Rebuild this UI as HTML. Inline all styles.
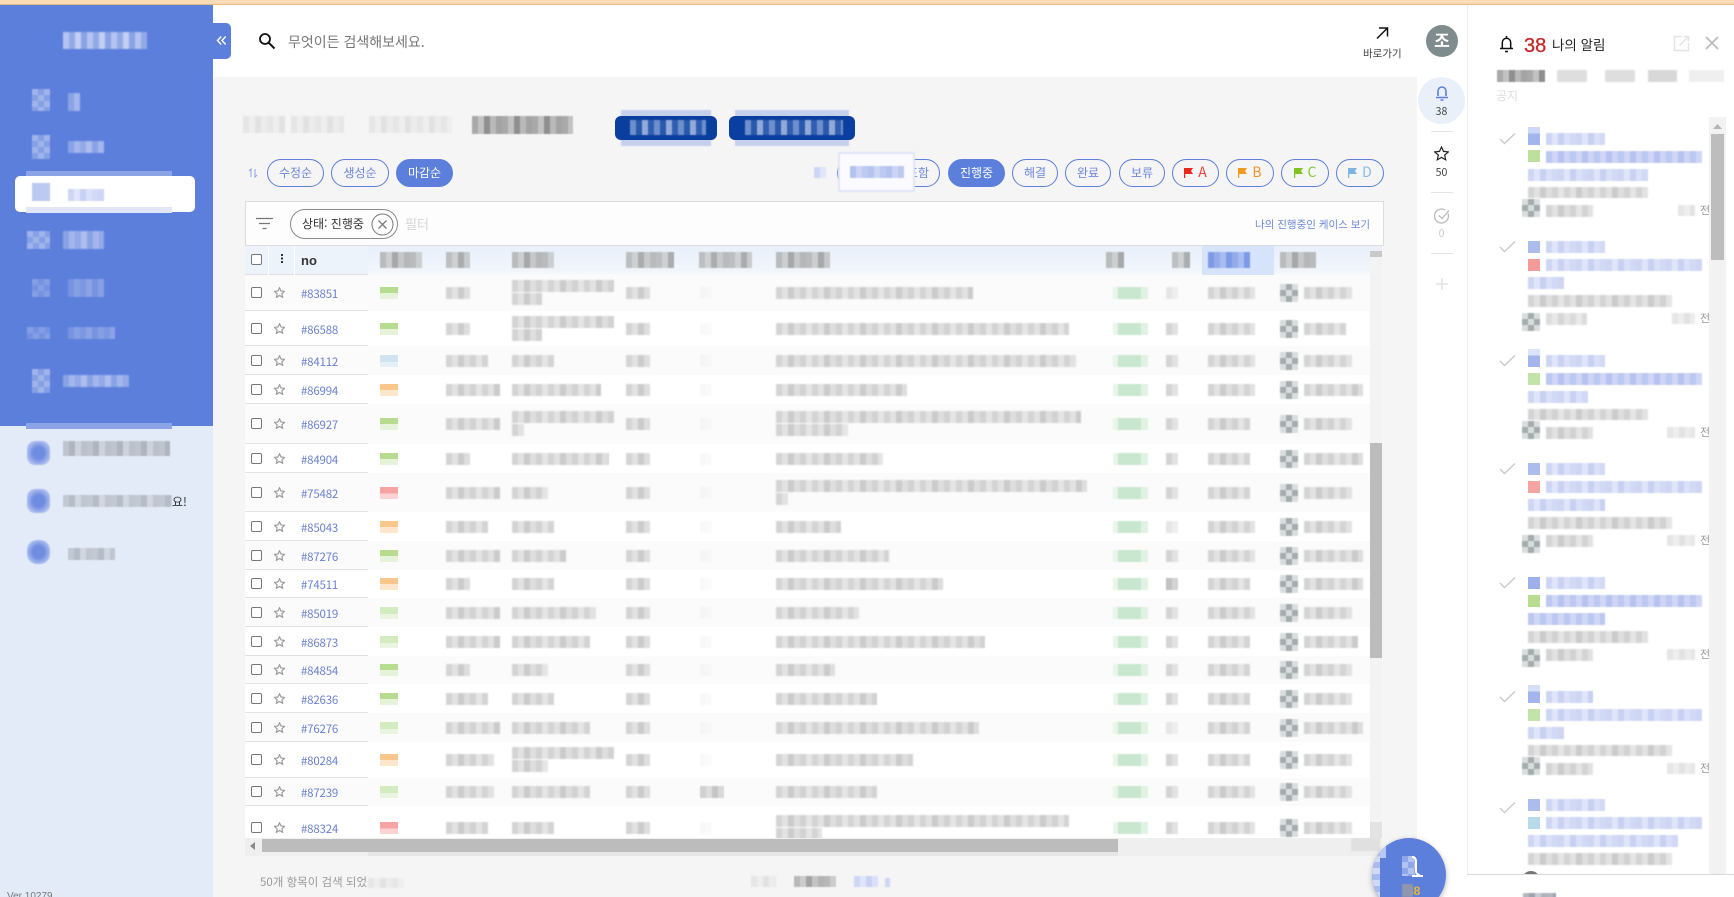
<!DOCTYPE html>
<html lang="ko"><head><meta charset="utf-8"><title>케이스</title>
<style>
*{box-sizing:border-box}
html,body{margin:0;padding:0;width:1734px;height:897px;overflow:hidden;background:#fff}
body{position:relative;font-family:"Liberation Sans","Noto Sans CJK KR",sans-serif;color:#333}
.kr{font-family:"Noto Sans CJK KR","Liberation Sans",sans-serif}
.a{position:absolute}
.g{background:repeating-linear-gradient(90deg,#d4d4d4 0 6px,#e2e2e2 6px 12px,#cbcbcb 12px 18px,#dedede 18px 24px,#d2d2d2 24px 30px,#e5e5e5 30px 36px);filter:blur(.7px)}
.d{background:repeating-linear-gradient(90deg,#a9a9a9 0 6px,#c2c2c2 6px 12px,#8f8f8f 12px 18px,#b9b9b9 18px 24px,#a3a3a3 24px 30px);filter:blur(.6px)}
.w{background:repeating-linear-gradient(90deg,#e6e6e6 0 6px,#eeeeee 6px 12px,#e2e2e2 12px 18px,#ececec 18px 24px);filter:blur(.7px)}
.l{background:repeating-linear-gradient(90deg,#ced6f4 0 6px,#e0e5f9 6px 12px,#c8d1f2 12px 18px,#dae0f8 18px 24px,#d1d9f5 24px 30px);filter:blur(.6px)}
.b{background:repeating-linear-gradient(90deg,#8aa2e6 0 6px,#a4b6ec 6px 12px,#93a9e8 12px 18px,#adbdee 18px 24px);filter:blur(.7px)}
.h{background:repeating-linear-gradient(90deg,#b3b7c0 0 6px,#9ea3ad 6px 12px,#c8ccd2 12px 18px,#aeb2bb 18px 24px);filter:blur(.6px)}
.ic{background:repeating-conic-gradient(#86a0e6 0 25%,#a0b4ec 0 50%) 0 0/12px 12px;filter:blur(.6px)}
.ic2{background:radial-gradient(#6f8ce0 35%,#a9baee 70%,#c6d2f3);filter:blur(.5px)}
.ck{background:repeating-conic-gradient(#a4acae 0 25%,#d9dddd 0 50%) 0 0/12px 12px;filter:blur(.4px)}
.pill{position:absolute;top:159px;height:28px;border:1px solid #5b7fdb;border-radius:14px;background:transparent;color:#6d87d8;font-size:12px;text-align:center;line-height:25px;font-family:"Noto Sans CJK KR","Liberation Sans",sans-serif}
.pill.on{background:#5b7fdb;color:#fff}
.pill svg{vertical-align:-1px;margin-right:5px}
.pill b{font-weight:400;font-size:14px}
.r{position:absolute;left:0;width:1125px;background:#fff}
.r.o{background:#fbfbfb}
.r::after{content:"";position:absolute;left:0;bottom:0;width:123px;height:1px;background:#e2e2e2}
.r>*{position:absolute;top:50%;margin-top:-6px;height:12px}
.r>i.cb{left:6px;width:11px;height:11px;border:1px solid #777;border-radius:2px;background:#fff;margin-top:-6px}
.r>svg.st{left:29px;width:11px;height:11px;margin-top:-6px}
.r>a{left:56px;height:16px;margin-top:-7px;line-height:16px;font-size:11.5px;color:#6b80cf;letter-spacing:-.2px;font-family:"Noto Sans CJK KR",sans-serif}
.fl{left:135px;width:18px}
.gr{background:linear-gradient(#b5dc8f 0 50%,#e6f2da 50%)}
.lg{background:linear-gradient(#d3ecbf 0 60%,#e9f5df 60%)}
.bl{background:linear-gradient(#cfe3f1 0 60%,#e4f0f7 60%)}
.or{background:linear-gradient(#f9c78b 0 50%,#fde6cc 50%)}
.rd{background:linear-gradient(#f7a3a3 0 55%,#fbd3d3 55%)}
.c2{left:201px}.c3{left:267px}.c4{left:381px;width:24px}.c5{left:455px;width:12px;opacity:.15}
.c6{left:531px}.c7{left:868px;width:35px;background:linear-gradient(90deg,#e8f5ea 0 5px,#c8e7ce 5px 28px,#e0f2e3 28px);filter:blur(.6px)}
.c8{left:921px;width:12px}.c9{left:963px;width:47px}.r>.av{left:1035px;width:18px;height:18px;margin-top:-9px}.c10{left:1059px;width:48px}
.two{margin-top:-13px !important}
.two::after{content:"";position:absolute;left:0;top:13px;height:12px;width:var(--b);background:inherit}
.it{position:absolute;left:0;width:267px;height:80px}
.it>*{position:absolute}
.it .k{left:32px;top:-1px;width:17px;height:13px}
.it .s{left:61px;width:12px;height:12px;top:0}
.it .t1{left:79px;width:59px;height:12px;top:0}
.it .t2{left:79px;width:156px;height:12px;top:18px}
.it .t3{left:61px;height:12px;top:36px}
.it .t4{left:61px;height:11px;top:54px}
.it .m{left:55px;width:18px;height:18px}
.it .mt{left:79px;height:12px}
.it .rt{left:211px;width:17px;height:11px;}
.it .jn{left:233px;font-size:11px;color:#999;line-height:14px;font-family:"Noto Sans CJK KR",sans-serif}
</style></head>
<body>
<!-- top strip -->
<div class="a" style="left:0;top:0;width:1734px;height:5px;background:#fcdcb4;border-bottom:1px solid #e3b98a"></div>

<!-- sidebar -->
<div class="a" style="left:0;top:5px;width:213px;height:421px;background:#5b7fdb"></div>
<div class="a" style="left:0;top:426px;width:213px;height:471px;background:#e3ebf9"></div>
<div class="a b" style="left:63px;top:32px;width:84px;height:17px;background:repeating-linear-gradient(90deg,#b4c4f0 0 6px,#93a9e8 6px 12px,#c3cff3 12px 18px,#8aa2e6 18px 24px)"></div>
<div class="a ic" style="left:32px;top:89px;width:18px;height:22px"></div><div class="a b" style="left:68px;top:93px;width:12px;height:18px"></div>
<div class="a ic" style="left:32px;top:135px;width:18px;height:24px"></div><div class="a b" style="left:68px;top:141px;width:36px;height:12px"></div>
<div class="a" style="left:26px;top:171px;width:146px;height:6px;background:#8ca4e6"></div>
<div class="a" style="left:15px;top:176px;width:180px;height:36px;background:#fff;border-radius:5px"></div>
<div class="a" style="left:26px;top:207px;width:146px;height:6px;background:#e1e6f8"></div>
<div class="a" style="left:32px;top:183px;width:18px;height:18px;background:#bcc9f0;filter:blur(.5px)"></div><div class="a l" style="left:68px;top:189px;width:36px;height:12px"></div>
<div class="a ic" style="left:27px;top:231px;width:23px;height:18px"></div><div class="a b" style="left:63px;top:231px;width:41px;height:18px"></div>
<div class="a ic" style="left:32px;top:279px;width:18px;height:18px;opacity:.6"></div><div class="a b" style="left:68px;top:279px;width:36px;height:18px;opacity:.6"></div>
<div class="a ic" style="left:27px;top:327px;width:23px;height:12px;opacity:.6"></div><div class="a b" style="left:68px;top:327px;width:47px;height:12px;opacity:.6"></div>
<div class="a ic" style="left:32px;top:369px;width:18px;height:24px"></div><div class="a b" style="left:63px;top:375px;width:66px;height:12px"></div>
<div class="a" style="left:26px;top:423px;width:146px;height:6px;background:#8ca4e6"></div>
<div class="a ic2" style="left:27px;top:441px;width:23px;height:24px;border-radius:8px"></div><div class="a h" style="left:63px;top:441px;width:107px;height:15px;opacity:.75"></div>
<div class="a ic2" style="left:27px;top:489px;width:23px;height:24px;border-radius:8px"></div><div class="a h" style="left:63px;top:495px;width:109px;height:12px;opacity:.65"></div>
<div class="a kr" style="left:172px;top:494px;font-size:12px;color:#333;line-height:16px">요!</div>
<div class="a ic2" style="left:27px;top:540px;width:23px;height:24px;border-radius:10px"></div><div class="a h" style="left:68px;top:548px;width:47px;height:12px;opacity:.65"></div>
<div class="a" style="left:7px;top:891px;font-size:10px;color:#777;line-height:12px">Ver 10279</div>

<!-- toggle -->
<div class="a" style="left:213px;top:23px;width:18px;height:36px;background:#5b7fdb;border-radius:0 5px 5px 0"></div>
<svg class="a" style="left:216px;top:35px" width="11" height="11" viewBox="0 0 11 11" fill="none" stroke="#fff" stroke-width="1.4"><path d="M5.2 1.5 1.5 5.500l3.700 4M9.700 1.500 6 5.500l3.700 4"/></svg>

<!-- header -->
<svg class="a" style="left:258px;top:32px" width="18" height="18" viewBox="0 0 18 18" fill="none" stroke="#111" stroke-width="1.8"><circle cx="7" cy="7" r="5"/><path d="M10.8 10.8 16.5 16.5" stroke-width="2"/></svg>
<div class="a kr" style="left:288px;top:31px;font-size:14px;color:#777;line-height:22px;white-space:nowrap">무엇이든 검색해보세요.</div>
<svg class="a" style="left:1375px;top:26px" width="14" height="14" viewBox="0 0 14 14" fill="none" stroke="#111" stroke-width="1.5"><path d="M2 12.500 12 2.500M4 2h8.500v8.500"/></svg>
<div class="a kr" style="left:1363px;top:46px;font-size:10.5px;color:#444;line-height:16px;white-space:nowrap">바로가기</div>
<div class="a kr" style="left:1426px;top:25px;width:32px;height:32px;border-radius:50%;background:#7f8c8d;color:#fff;font-size:17px;font-weight:700;text-align:center;line-height:29px">조</div>

<!-- content bg -->
<div class="a" style="left:213px;top:77px;width:1204px;height:820px;background:#f5f5f5"></div>

<!-- breadcrumb -->
<div class="a w" style="left:243px;top:116px;width:42px;height:17px"></div>
<div class="a w" style="left:291px;top:116px;width:53px;height:17px"></div>
<div class="a w" style="left:369px;top:116px;width:83px;height:17px"></div>
<div class="a d" style="left:472px;top:116px;width:101px;height:18px"></div>

<!-- blue mosaic buttons -->
<div class="a" style="left:621px;top:110px;width:90px;height:36px;background:#c4d0ec;filter:blur(.6px)"></div>
<div class="a" style="left:615px;top:116px;width:102px;height:24px;background:#0a3fa0;border-radius:6px"></div>
<div class="a" style="left:630px;top:120px;width:76px;height:15px;background:repeating-linear-gradient(90deg,#6f8fcc 0 6px,#2a58ad 6px 12px,#93aad8 12px 18px,#315eb2 18px 24px);filter:blur(.6px)"></div>
<div class="a" style="left:735px;top:110px;width:114px;height:36px;background:#c4d0ec;filter:blur(.6px)"></div>
<div class="a" style="left:729px;top:116px;width:126px;height:24px;background:#0a3fa0;border-radius:6px"></div>
<div class="a" style="left:745px;top:120px;width:98px;height:15px;background:repeating-linear-gradient(90deg,#6f8fcc 0 6px,#2a58ad 6px 12px,#93aad8 12px 18px,#315eb2 18px 24px);filter:blur(.6px)"></div>

<!-- sort -->
<svg class="a" style="left:248px;top:167px" width="10" height="12" viewBox="0 0 10 12" fill="none" stroke="#8ea3e0" stroke-width="1"><path d="M3 10V2L1 4M7 2v8l2-2"/></svg>
<div class="pill" style="left:267px;width:57px">수정순</div>
<div class="pill" style="left:331px;width:58px">생성순</div>
<div class="pill on" style="left:396px;width:57px">마감순</div>

<div class="pill" style="left:837px;width:103px;text-align:right;padding-right:10px">포함</div>
<div class="a l" style="left:814px;top:167px;width:12px;height:11px"></div>
<div class="a" style="left:840px;top:154px;width:73px;height:36px;background:#fbfbff;box-shadow:0 0 0 2px #e0e5f7;filter:blur(.5px)"></div>
<div class="a l" style="left:850px;top:166px;width:54px;height:12px;background:repeating-linear-gradient(90deg,#b4c2ee 0 6px,#ccd5f4 6px 12px,#bcc9f0 12px 18px)"></div>
<div class="pill on" style="left:948px;width:57px">진행중</div>
<div class="pill" style="left:1012px;width:46px">해결</div>
<div class="pill" style="left:1065px;width:46px">완료</div>
<div class="pill" style="left:1119px;width:46px">보류</div>
<div class="pill" style="left:1172px;width:47px;color:#e8453a"><svg width="9" height="10" viewBox="0 0 9 10"><path d="M0 0h9L7 3l2 3H1.2v4H0z" fill="#e8281c"/></svg><b>A</b></div>
<div class="pill" style="left:1226px;width:48px;color:#f0922a"><svg width="9" height="10" viewBox="0 0 9 10"><path d="M0 0h9L7 3l2 3H1.2v4H0z" fill="#f29a1e"/></svg><b>B</b></div>
<div class="pill" style="left:1281px;width:48px;color:#84c832"><svg width="9" height="10" viewBox="0 0 9 10"><path d="M0 0h9L7 3l2 3H1.2v4H0z" fill="#7ec522"/></svg><b>C</b></div>
<div class="pill" style="left:1336px;width:48px;color:#8ab8e4"><svg width="9" height="10" viewBox="0 0 9 10"><path d="M0 0h9L7 3l2 3H1.2v4H0z" fill="#7fb3e0"/></svg><b>D</b></div>

<!-- filter bar -->
<div class="a" style="left:245px;top:201px;width:1139px;height:45px;background:#fdfdfd;border:1px solid #dcdcdc"></div>
<svg class="a" style="left:256px;top:217px" width="17" height="13" viewBox="0 0 17 13" fill="none" stroke="#777" stroke-width="1.3"><path d="M0 1.500h17M3 6.500h11M6.500 11.500h4"/></svg>
<div class="a" style="left:290px;top:209px;width:108px;height:30px;border:1px solid #8a8a8a;border-radius:15px;background:#fdfdfd"></div>
<div class="a kr" style="left:302px;top:215px;font-size:12px;color:#333;line-height:18px;white-space:nowrap">상태: 진행중</div>
<svg class="a" style="left:371px;top:213px" width="23" height="23" viewBox="0 0 23 23" fill="none" stroke="#777"><circle cx="11.500" cy="11.500" r="10.500"/><path d="M7.500 7.500l8 8M15.500 7.500l-8 8" stroke-width="1.3"/></svg>
<div class="a kr" style="left:405px;top:215px;font-size:13px;color:#d5d5d5;line-height:18px">필터</div>
<div class="a kr" style="left:1255px;top:216px;font-size:10.5px;color:#6b86d6;line-height:18px;white-space:nowrap">나의 진행중인 케이스 보기</div>

<!-- table -->
<div class="a" style="left:245px;top:246px;width:1137px;height:610px;background:#f9f9f9"></div>
<div class="a" style="left:245px;top:246px;width:1137px;height:30px;background:linear-gradient(#e9f0fa,#f1f5fb 80%,#f9fafc)"></div>
<div class="a" style="left:245px;top:246px;width:123px;height:29px;background:#edf3fa;border-bottom:1px solid #e0e0e0"></div>
<div class="a" style="left:268px;top:246px;width:1px;height:29px;background:#fff"></div>
<div class="a" style="left:294px;top:246px;width:1px;height:29px;background:#fff"></div>
<i class="a" style="left:251px;top:254px;width:11px;height:11px;border:1px solid #777;border-radius:2px;background:#fff"></i>
<div class="a" style="left:280.5px;top:254px;width:2px;height:2px;background:#333;box-shadow:0 3.5px #333,0 7px #333"></div>
<div class="a" style="left:301px;top:252px;font-size:13px;font-weight:700;color:#333;line-height:18px">no</div>
<div class="a d" style="left:380px;top:252px;width:42px;height:16px;opacity:.75"></div>
<div class="a d" style="left:446px;top:252px;width:24px;height:16px;opacity:.7"></div>
<div class="a d" style="left:512px;top:252px;width:42px;height:16px;opacity:.75"></div>
<div class="a d" style="left:626px;top:252px;width:48px;height:16px;opacity:.7"></div>
<div class="a d" style="left:699px;top:252px;width:53px;height:16px;opacity:.7"></div>
<div class="a d" style="left:776px;top:252px;width:54px;height:16px;opacity:.75"></div>
<div class="a d" style="left:1106px;top:252px;width:18px;height:16px;opacity:.75"></div>
<div class="a d" style="left:1172px;top:252px;width:18px;height:16px;opacity:.7"></div>
<div class="a" style="left:1202px;top:246px;width:72px;height:29px;background:#d6e4fb"></div>
<div class="a" style="left:1208px;top:252px;width:42px;height:16px;background:repeating-linear-gradient(90deg,#7e9ae6 0 6px,#94abea 6px 12px,#a9bcef 12px 18px);filter:blur(.6px)"></div>
<div class="a d" style="left:1280px;top:252px;width:36px;height:16px;opacity:.75"></div>
<div class="a" style="left:1370px;top:251px;width:12px;height:6px;background:#c9c9c9"></div>

<div class="a" style="left:245px;top:275px;width:1125px;height:563px;overflow:hidden">
<svg width="0" height="0" style="position:absolute"><defs><path id="st" d="M5.500.8 7 4l3.500.4-2.600 2.400.7 3.500-3.100-1.800-3.100 1.800.7-3.500L.5 4.400 4 4z" fill="none" stroke="#9c9c9c" stroke-width="1.200"/></defs></svg>
<div class="r o" style="top:0;height:36px"><i class="cb"></i><svg class="st" viewBox="0 0 11 11"><use href="#st"/></svg><a>#83851</a><div class="fl gr"></div><div class="g c2" style="width:24px"></div><div class="g c3 two" style="width:102px;--b:30px"></div><div class="g c4"></div><div class="g c5"></div><div class="g c6" style="width:197px"></div><div class="c7"></div><div class="w c8"></div><div class="g c9"></div><div class="ck av"></div><div class="g c10"></div></div>
<div class="r" style="top:36px;height:35px"><i class="cb"></i><svg class="st" viewBox="0 0 11 11"><use href="#st"/></svg><a>#86588</a><div class="fl gr"></div><div class="g c2" style="width:24px"></div><div class="g c3 two" style="width:102px;--b:30px"></div><div class="g c4"></div><div class="g c5"></div><div class="g c6" style="width:293px"></div><div class="c7"></div><div class="g c8"></div><div class="g c9"></div><div class="ck av"></div><div class="g c10" style="width:42px"></div></div>
<div class="r o" style="top:71px;height:29px"><i class="cb"></i><svg class="st" viewBox="0 0 11 11"><use href="#st"/></svg><a>#84112</a><div class="fl bl"></div><div class="g c2" style="width:42px"></div><div class="g c3" style="width:42px"></div><div class="g c4"></div><div class="g c5"></div><div class="g c6" style="width:300px"></div><div class="c7"></div><div class="g c8"></div><div class="g c9"></div><div class="ck av"></div><div class="g c10"></div></div>
<div class="r" style="top:100px;height:29px"><i class="cb"></i><svg class="st" viewBox="0 0 11 11"><use href="#st"/></svg><a>#86994</a><div class="fl or"></div><div class="g c2" style="width:54px"></div><div class="g c3" style="width:89px"></div><div class="g c4"></div><div class="g c5"></div><div class="g c6" style="width:131px"></div><div class="c7"></div><div class="g c8"></div><div class="g c9"></div><div class="ck av"></div><div class="g c10" style="width:59px"></div></div>
<div class="r o" style="top:129px;height:40px"><i class="cb"></i><svg class="st" viewBox="0 0 11 11"><use href="#st"/></svg><a>#86927</a><div class="fl gr"></div><div class="g c2" style="width:54px"></div><div class="g c3 two" style="width:102px;--b:12px"></div><div class="g c4"></div><div class="g c5"></div><div class="g c6 two" style="width:305px;--b:72px"></div><div class="c7"></div><div class="g c8"></div><div class="g c9" style="width:42px"></div><div class="ck av"></div><div class="g c10"></div></div>
<div class="r" style="top:169px;height:29px"><i class="cb"></i><svg class="st" viewBox="0 0 11 11"><use href="#st"/></svg><a>#84904</a><div class="fl gr"></div><div class="g c2" style="width:24px"></div><div class="g c3" style="width:97px"></div><div class="g c4"></div><div class="g c5"></div><div class="g c6" style="width:107px"></div><div class="c7"></div><div class="g c8"></div><div class="g c9" style="width:42px"></div><div class="ck av"></div><div class="g c10" style="width:59px"></div></div>
<div class="r o" style="top:198px;height:39px"><i class="cb"></i><svg class="st" viewBox="0 0 11 11"><use href="#st"/></svg><a>#75482</a><div class="fl rd"></div><div class="g c2" style="width:54px"></div><div class="g c3" style="width:36px"></div><div class="g c4"></div><div class="g c5"></div><div class="g c6 two" style="width:311px;--b:12px"></div><div class="c7"></div><div class="g c8"></div><div class="g c9" style="width:42px"></div><div class="ck av"></div><div class="g c10"></div></div>
<div class="r" style="top:237px;height:29px"><i class="cb"></i><svg class="st" viewBox="0 0 11 11"><use href="#st"/></svg><a>#85043</a><div class="fl or"></div><div class="g c2" style="width:42px"></div><div class="g c3" style="width:42px"></div><div class="g c4"></div><div class="g c5"></div><div class="g c6" style="width:65px"></div><div class="c7"></div><div class="w c8"></div><div class="g c9"></div><div class="ck av"></div><div class="g c10"></div></div>
<div class="r o" style="top:266px;height:29px"><i class="cb"></i><svg class="st" viewBox="0 0 11 11"><use href="#st"/></svg><a>#87276</a><div class="fl gr"></div><div class="g c2" style="width:54px"></div><div class="g c3" style="width:54px"></div><div class="g c4"></div><div class="g c5"></div><div class="g c6" style="width:113px"></div><div class="c7"></div><div class="g c8"></div><div class="g c9"></div><div class="ck av"></div><div class="g c10" style="width:59px"></div></div>
<div class="r" style="top:295px;height:28px"><i class="cb"></i><svg class="st" viewBox="0 0 11 11"><use href="#st"/></svg><a>#74511</a><div class="fl or"></div><div class="g c2" style="width:24px"></div><div class="g c3" style="width:42px"></div><div class="g c4"></div><div class="g c5"></div><div class="g c6" style="width:167px"></div><div class="c7"></div><div class="d c8" style="opacity:.7"></div><div class="g c9" style="width:42px"></div><div class="ck av"></div><div class="g c10" style="width:59px"></div></div>
<div class="r o" style="top:323px;height:29px"><i class="cb"></i><svg class="st" viewBox="0 0 11 11"><use href="#st"/></svg><a>#85019</a><div class="fl lg"></div><div class="g c2" style="width:54px"></div><div class="g c3" style="width:84px"></div><div class="g c4"></div><div class="g c5"></div><div class="g c6" style="width:83px"></div><div class="c7"></div><div class="g c8"></div><div class="g c9"></div><div class="ck av"></div><div class="g c10"></div></div>
<div class="r" style="top:352px;height:29px"><i class="cb"></i><svg class="st" viewBox="0 0 11 11"><use href="#st"/></svg><a>#86873</a><div class="fl lg"></div><div class="g c2" style="width:54px"></div><div class="g c3" style="width:78px"></div><div class="g c4"></div><div class="g c5"></div><div class="g c6" style="width:209px"></div><div class="c7"></div><div class="g c8"></div><div class="g c9" style="width:42px"></div><div class="ck av"></div><div class="g c10" style="width:54px"></div></div>
<div class="r o" style="top:381px;height:28px"><i class="cb"></i><svg class="st" viewBox="0 0 11 11"><use href="#st"/></svg><a>#84854</a><div class="fl gr"></div><div class="g c2" style="width:24px"></div><div class="g c3" style="width:36px"></div><div class="g c4"></div><div class="g c5"></div><div class="g c6" style="width:59px"></div><div class="c7"></div><div class="g c8"></div><div class="g c9" style="width:42px"></div><div class="ck av"></div><div class="g c10"></div></div>
<div class="r" style="top:409px;height:29px"><i class="cb"></i><svg class="st" viewBox="0 0 11 11"><use href="#st"/></svg><a>#82636</a><div class="fl gr"></div><div class="g c2" style="width:42px"></div><div class="g c3" style="width:42px"></div><div class="g c4"></div><div class="g c5"></div><div class="g c6" style="width:101px"></div><div class="c7"></div><div class="g c8"></div><div class="g c9" style="width:42px"></div><div class="ck av"></div><div class="g c10"></div></div>
<div class="r o" style="top:438px;height:29px"><i class="cb"></i><svg class="st" viewBox="0 0 11 11"><use href="#st"/></svg><a>#76276</a><div class="fl lg"></div><div class="g c2" style="width:54px"></div><div class="g c3" style="width:78px"></div><div class="g c4"></div><div class="g c5"></div><div class="g c6" style="width:203px"></div><div class="c7"></div><div class="w c8"></div><div class="g c9" style="width:42px"></div><div class="ck av"></div><div class="g c10" style="width:59px"></div></div>
<div class="r" style="top:467px;height:36px"><i class="cb"></i><svg class="st" viewBox="0 0 11 11"><use href="#st"/></svg><a>#80284</a><div class="fl or"></div><div class="g c2" style="width:48px"></div><div class="g c3 two" style="width:102px;--b:36px"></div><div class="g c4"></div><div class="g c5"></div><div class="g c6" style="width:137px"></div><div class="c7"></div><div class="g c8"></div><div class="g c9" style="width:42px"></div><div class="ck av"></div><div class="g c10"></div></div>
<div class="r o" style="top:503px;height:28px"><i class="cb"></i><svg class="st" viewBox="0 0 11 11"><use href="#st"/></svg><a>#87239</a><div class="fl lg"></div><div class="g c2" style="width:48px"></div><div class="g c3" style="width:78px"></div><div class="g c4"></div><div class="d c5" style="width:24px;opacity:.5"></div><div class="g c6" style="width:101px"></div><div class="c7"></div><div class="g c8"></div><div class="g c9"></div><div class="ck av"></div><div class="g c10"></div></div>
<div class="r" style="top:531px;height:44px"><i class="cb"></i><svg class="st" viewBox="0 0 11 11"><use href="#st"/></svg><a>#88324</a><div class="fl rd"></div><div class="g c2" style="width:42px"></div><div class="g c3" style="width:42px"></div><div class="g c4"></div><div class="g c5"></div><div class="g c6 two" style="width:293px;--b:46px"></div><div class="c7"></div><div class="g c8"></div><div class="g c9"></div><div class="ck av"></div><div class="g c10"></div></div>
</div>
<!-- scrollbars -->
<div class="a" style="left:1370px;top:257px;width:12px;height:581px;background:#f3f3f3"></div>
<div class="a" style="left:1370px;top:443px;width:12px;height:215px;background:#bcbcbc"></div>
<div class="a" style="left:1370px;top:822px;width:12px;height:16px;background:#e3e3e3"></div>
<div class="a" style="left:245px;top:838px;width:1137px;height:18px;background:#efefef"></div>
<div class="a" style="left:262px;top:839px;width:856px;height:13px;background:#bcbcbc"></div>
<div class="a" style="left:368px;top:852px;width:750px;height:4px;background:#e6e6e6"></div>
<svg class="a" style="left:250px;top:842px" width="6" height="8"><path d="M5 0v8L0 4z" fill="#888"/></svg>
<div class="a" style="left:1351px;top:838px;width:29px;height:13px;background:#e0e0e0;filter:blur(.6px)"></div>

<!-- footer -->
<div class="a kr" style="left:260px;top:873px;font-size:11.5px;color:#999;line-height:18px;white-space:nowrap;width:108px;overflow:hidden">50개 항목이 검색 되었습니다</div>
<div class="a w" style="left:368px;top:878px;width:36px;height:10px"></div>
<div class="a w" style="left:751px;top:876px;width:25px;height:11px"></div>
<div class="a d" style="left:794px;top:876px;width:42px;height:11px;opacity:.8"></div>
<div class="a l" style="left:854px;top:876px;width:24px;height:11px"></div>
<div class="a l" style="left:885px;top:878px;width:5px;height:9px"></div>

<!-- right rail -->
<div class="a" style="left:1418px;top:77px;width:47px;height:47px;border-radius:50%;background:#eaf0fa"></div>
<svg class="a" style="left:1435px;top:85px" width="14" height="16" viewBox="0 0 14 16" fill="none" stroke="#5b7fdb" stroke-width="1.6"><path d="M3 11V6a4 4 0 0 1 8 0v5M1 12.500h12M5.500 15h3"/></svg>
<div class="a kr" style="left:1418px;top:104px;width:47px;text-align:center;font-size:10.5px;color:#444;line-height:16px">38</div>
<div class="a" style="left:1431px;top:131px;width:22px;height:1px;background:#e3e3e3"></div>
<svg class="a" style="left:1434px;top:146px" width="15" height="15" viewBox="0 0 15 15" fill="none" stroke="#222" stroke-width="1.2"><path d="M7.500 1 9.500 5.400l4.800.5-3.600 3.200 1 4.700-4.200-2.400-4.200 2.400 1-4.700L.7 5.900l4.800-.5z"/></svg>
<div class="a kr" style="left:1418px;top:165px;width:47px;text-align:center;font-size:10.5px;color:#444;line-height:16px">50</div>
<div class="a" style="left:1431px;top:192px;width:22px;height:1px;background:#e3e3e3"></div>
<svg class="a" style="left:1434px;top:208px" width="16" height="16" viewBox="0 0 16 16" fill="none" stroke="#bbb" stroke-width="1.3"><path d="M14 5.500A7 7 0 1 1 11 2"/><path d="M4.800 7.500 8 10.500l7-8"/></svg>
<div class="a kr" style="left:1418px;top:226px;width:47px;text-align:center;font-size:10.5px;color:#ccc;line-height:16px">0</div>
<div class="a" style="left:1431px;top:253px;width:22px;height:1px;background:#e3e3e3"></div>
<svg class="a" style="left:1436px;top:278px" width="12" height="12" fill="none" stroke="#ddd" stroke-width="1.3"><path d="M6 0v12M0 6h12"/></svg>

<!-- notification panel -->
<div class="a" style="left:1467px;top:5px;width:267px;height:892px;background:#fff;border-left:1px solid #eee"></div>
<svg class="a" style="left:1499px;top:35px" width="15" height="18" viewBox="0 0 15 18" fill="none" stroke="#111" stroke-width="1.5"><path d="M3.300 13V7.500a4.200 4.200 0 0 1 8.400 0V13M1 13.500h13M6 16.500h3"/><path d="M7.500 1v2"/></svg>
<div class="a" style="left:1524px;top:33px;font-size:20px;color:#c62828;line-height:26px;font-weight:400;-webkit-text-stroke:.3px #c62828">38</div>
<div class="a kr" style="left:1552px;top:33px;font-size:13.5px;color:#222;line-height:22px;white-space:nowrap">나의 알림</div>
<svg class="a" style="left:1673px;top:35px" width="17" height="17" viewBox="0 0 17 17" fill="none" stroke="#e4e4e4" stroke-width="1.5"><path d="M15.500 8v7.500h-14v-14H9M6.500 10.500 15.500 1.500M10.500 1.500h5v5"/></svg>
<svg class="a" style="left:1705px;top:36px" width="14" height="14" fill="none" stroke="#bbb" stroke-width="1.8"><path d="M1 1l12 12M13 1 1 13"/></svg>
<div class="a d" style="left:1497px;top:70px;width:48px;height:12px"></div>
<div class="a w" style="left:1557px;top:70px;width:30px;height:12px;background:#dedede"></div>
<div class="a w" style="left:1605px;top:70px;width:30px;height:12px;background:#dedede"></div>
<div class="a w" style="left:1648px;top:70px;width:29px;height:12px;background:#d8d8d8"></div>
<div class="a w" style="left:1689px;top:70px;width:35px;height:12px;background:#efefef"></div>
<div class="a kr" style="left:1496px;top:87px;font-size:12px;color:#ddd;line-height:18px">공지</div>

<div class="a" style="left:1709px;top:117px;width:17px;height:757px;background:#f2f2f2"></div>
<div class="a" style="left:1711px;top:134px;width:13px;height:126px;background:#bdbdbd"></div>
<svg class="a" style="left:1713px;top:124px" width="9" height="5"><path d="M4.500 0 9 5H0z" fill="#b5b5b5"/></svg>

<div class="a" style="left:1467px;top:0;width:242px;height:874px;overflow:hidden">
<svg width="0" height="0" style="position:absolute"><defs><path id="ck" d="M1 6.500 5.500 11 16 1" fill="none" stroke="#ccc" stroke-width="1.5"/></defs></svg>
<div class="it" style="top:133px"><svg class="k" viewBox="0 0 17 12"><use href="#ck"/></svg><div class="s" style="top:-6px;height:18px;background:linear-gradient(#cfd8f6 35%,#a3b5ec 35%)"></div><div class="l t1"></div><div class="s" style="top:17px;background:#bfe09c"></div><div class="l t2" style="background:repeating-linear-gradient(90deg,#bcc8f0 0 6px,#cfd7f5 6px 12px,#b6c3ef 12px 18px,#ccd5f4 18px 24px)"></div><div class="l t3" style="width:120px"></div><div class="g t4" style="width:120px"></div><div class="ck m" style="top:66px"></div><div class="g mt" style="top:72px;width:47px"></div><div class="w rt" style="top:72px"></div><div class="jn" style="top:70px">전</div></div>
<div class="it" style="top:241px"><svg class="k" viewBox="0 0 17 12"><use href="#ck"/></svg><div class="s" style="background:#abbced"></div><div class="l t1"></div><div class="s" style="top:18px;background:#f29b98"></div><div class="l t2"></div><div class="l t3" style="width:36px"></div><div class="g t4" style="width:144px;height:12px"></div><div class="ck m" style="top:72px"></div><div class="g mt" style="top:72px;width:41px;opacity:.8"></div><div class="w rt" style="top:72px;left:205px;width:23px"></div><div class="jn" style="top:70px">전</div></div>
<div class="it" style="top:355px"><svg class="k" viewBox="0 0 17 12"><use href="#ck"/></svg><div class="s" style="top:-6px;height:18px;background:linear-gradient(#dee4f8 35%,#a3b5ec 35%)"></div><div class="l t1"></div><div class="s" style="top:18px;background:#c4e3a8"></div><div class="l t2" style="background:repeating-linear-gradient(90deg,#bcc8f0 0 6px,#cfd7f5 6px 12px,#b6c3ef 12px 18px,#ccd5f4 18px 24px)"></div><div class="l t3" style="width:60px"></div><div class="g t4" style="width:120px"></div><div class="ck m" style="top:66px"></div><div class="g mt" style="top:72px;width:47px"></div><div class="w rt" style="top:72px;left:200px;width:28px"></div><div class="jn" style="top:70px">전</div></div>
<div class="it" style="top:463px"><svg class="k" viewBox="0 0 17 12"><use href="#ck"/></svg><div class="s" style="background:#abbced"></div><div class="l t1"></div><div class="s" style="top:18px;background:#f5a5a1"></div><div class="l t2"></div><div class="l t3" style="width:77px"></div><div class="g t4" style="width:144px;height:12px"></div><div class="ck m" style="top:72px"></div><div class="g mt" style="top:72px;width:47px"></div><div class="w rt" style="top:72px;left:200px;width:28px"></div><div class="jn" style="top:70px">전</div></div>
<div class="it" style="top:577px"><svg class="k" viewBox="0 0 17 12"><use href="#ck"/></svg><div class="s" style="background:#9db0ea"></div><div class="l t1"></div><div class="s" style="top:18px;background:#b7dd90"></div><div class="l t2" style="background:repeating-linear-gradient(90deg,#bcc8f0 0 6px,#cfd7f5 6px 12px,#b6c3ef 12px 18px,#ccd5f4 18px 24px)"></div><div class="l t3" style="width:77px;background:repeating-linear-gradient(90deg,#bcc8f0 0 6px,#cfd7f5 6px 12px)"></div><div class="g t4" style="width:120px;height:12px"></div><div class="ck m" style="top:72px"></div><div class="g mt" style="top:72px;width:47px"></div><div class="w rt" style="top:72px;left:200px;width:28px"></div><div class="jn" style="top:70px">전</div></div>
<div class="it" style="top:691px"><svg class="k" viewBox="0 0 17 12"><use href="#ck"/></svg><div class="s" style="top:-6px;height:18px;background:linear-gradient(#d6dff7 35%,#a3b5ec 35%)"></div><div class="l t1" style="width:47px"></div><div class="s" style="top:18px;background:#c4e3a8"></div><div class="l t2"></div><div class="l t3" style="width:36px"></div><div class="g t4" style="width:144px"></div><div class="ck m" style="top:66px"></div><div class="g mt" style="top:72px;width:47px"></div><div class="w rt" style="top:72px;left:200px;width:28px"></div><div class="jn" style="top:70px">전</div></div>
<div class="it" style="top:799px"><svg class="k" style="top:2px" viewBox="0 0 17 12"><use href="#ck"/></svg><div class="s" style="background:#abbced"></div><div class="l t1"></div><div class="s" style="top:18px;background:#b8daea"></div><div class="l t2"></div><div class="l t3" style="width:150px"></div><div class="g t4" style="width:144px;height:12px"></div><div class="a" style="left:55px;top:72px;width:18px;height:18px;background:#777;border-radius:50%"></div></div>
</div>
<div class="a" style="left:1467px;top:874px;width:267px;height:23px;background:#fff;border-top:1px solid #d9d9d9"></div>
<div class="a h" style="left:1523px;top:893px;width:33px;height:5px"></div>

<!-- FAB -->
<div class="a" style="left:1372px;top:838px;width:74px;height:74px;border-radius:50%;background:#5b7fdb;box-shadow:0 2px 6px rgba(0,0,0,.3);overflow:hidden"><div style="position:absolute;left:0;top:0;width:8px;height:74px;background:repeating-linear-gradient(180deg,#a9baee 0 6px,#d0daf5 6px 12px)"></div><div style="position:absolute;left:8px;top:0;width:6px;height:20px;background:#b9c8f0"></div></div>
<div class="a" style="left:1402px;top:856px;width:13px;height:20px;background:repeating-conic-gradient(#b3c3f0 0 25%,#8fa7e8 0 50%) 0 0/12px 12px"></div>
<svg class="a" style="left:1412px;top:855px" width="12" height="23" viewBox="0 0 12 23" fill="none" stroke="#fff" stroke-width="2"><path d="M0 2c3 0 4 2 4 5v10c0 1.500 2 2.500 4 3.500"/><path d="M0 21h11"/></svg>
<div class="a" style="left:1407px;top:884px;font-size:12px;font-weight:700;color:#e9b92e;line-height:14px">38</div>
<div class="a" style="left:1402px;top:884px;width:11px;height:13px;background:#8f96ad;filter:blur(.5px)"></div>
</body></html>
